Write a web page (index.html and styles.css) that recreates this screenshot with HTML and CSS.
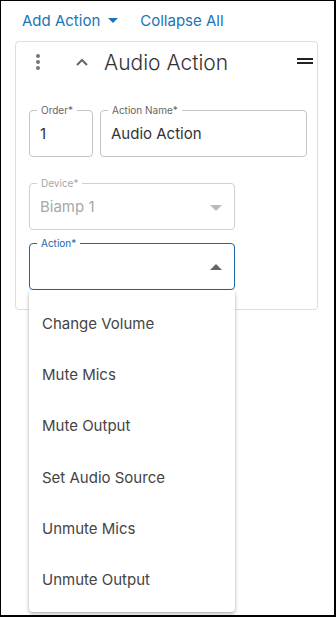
FILE: index.html
```html
<!DOCTYPE html>
<html lang="en">
<head>
    <meta charset="UTF-8">
    <title>Audio Action</title>
    <link rel="stylesheet" href="styles.css">
</head>
<body>
    <div class="frame">
        <div class="toolbar">
            <a class="link" href="#">Add Action <span class="caret-down"></span></a>
            <a class="link" href="#">Collapse All</a>
        </div>

        <div class="card">
            <div class="card-header">
                <span class="kebab"><i></i><i></i><i></i></span>
                <svg class="chevron" width="14" height="10" viewBox="0 0 14 10">
                    <path d="M2 8 L7 3 L12 8" fill="none" stroke="#666" stroke-width="2"/>
                </svg>
                <h2 class="card-title">Audio Action</h2>
                <span class="drag"><i></i><i></i></span>
            </div>

            <div class="card-body">
                <div class="row">
                    <div class="field field-order">
                        <label>Order*</label>
                        <div class="value">1</div>
                    </div>
                    <div class="field field-name">
                        <label>Action Name*</label>
                        <div class="value">Audio Action</div>
                    </div>
                </div>

                <div class="field field-select disabled">
                    <label>Device*</label>
                    <div class="value">Biamp 1</div>
                    <span class="arrow arrow-down"></span>
                </div>

                <div class="field field-select focused">
                    <label>Action*</label>
                    <div class="value"></div>
                    <span class="arrow arrow-up"></span>

                    <ul class="menu">
                        <li>Change Volume</li>
                        <li>Mute Mics</li>
                        <li>Mute Output</li>
                        <li>Set Audio Source</li>
                        <li>Unmute Mics</li>
                        <li>Unmute Output</li>
                    </ul>
                </div>
            </div>
        </div>
    </div>
</body>
</html>
```

FILE: styles.css
```css
body {
    margin: 0;
    font-family: 'Inter', 'Open Sans', sans-serif;
    color: #333;
    background: #fff;
}

.frame {
    width: 336px;
    height: 617px;
    box-sizing: border-box;
    border-style: solid;
    border-color: #000;
    border-width: 1px 2px 2px 1px;
    padding: 8px 0 0 14px;
}

/* --- top links --- */
.toolbar {
    display: flex;
    align-items: center;
    gap: 22px;
    padding-left: 7px;
    height: 22px;
}

.link {
    color: #1a74b6;
    text-decoration: none;
    font-size: 15px;
    display: flex;
    align-items: center;
}

.caret-down {
    display: inline-block;
    width: 0;
    height: 0;
    margin-left: 8px;
    border-left: 5px solid transparent;
    border-right: 5px solid transparent;
    border-top: 5px solid #1a74b6;
}

/* --- card --- */
.card {
    margin-top: 10px;
    width: 303px;
    height: 269px;
    box-sizing: border-box;
    border: 1px solid #ddd;
    border-radius: 4px;
}

.card-header {
    display: flex;
    align-items: center;
    height: 40px;
    padding: 0 4px 0 20px;
}

.kebab {
    display: flex;
    flex-direction: column;
    gap: 2px;
    width: 4px;
}
.kebab i {
    width: 4px;
    height: 4px;
    border-radius: 50%;
    background: #777;
}

.chevron {
    margin-left: 35px;
}

.card-title {
    margin: 0 0 0 15px;
    font-size: 21px;
    font-weight: 300;
    color: #333;
    flex: 1;
}

.drag {
    display: flex;
    flex-direction: column;
    gap: 2px;
    align-self: flex-start;
    margin-top: 16px;
}
.drag i {
    width: 16px;
    height: 2px;
    background: #222;
}

.card-body {
    padding: 28px 0 0 13px;
}

.row {
    display: flex;
    gap: 7px;
    margin-bottom: 26px;
}

/* --- outlined fields --- */
.field {
    position: relative;
    height: 47px;
    box-sizing: border-box;
    border: 1px solid #c4c4c4;
    border-radius: 4px;
    display: flex;
    align-items: center;
    padding: 0 10px;
}

.field label {
    position: absolute;
    top: -7px;
    left: 7px;
    padding: 0 4px;
    background: #fff;
    font-size: 10px;
    color: #666;
    line-height: 12px;
}

.field .value {
    font-size: 15px;
    color: #333;
}

.field-order {
    width: 64px;
}

.field-name {
    width: 207px;
}

.field-select {
    width: 206px;
}

.disabled {
    border-color: #d0d0d0;
    margin-bottom: 13px;
}
.disabled label,
.disabled .value {
    color: #a8a8a8;
}

.focused {
    border-color: #1a66ad;
}
.focused label {
    color: #1a66ad;
}

.arrow {
    position: absolute;
    right: 12px;
    top: 21px;
    width: 0;
    height: 0;
    border-left: 6px solid transparent;
    border-right: 6px solid transparent;
}
.arrow-down {
    border-top: 6px solid #bbb;
}
.arrow-up {
    top: 20px;
    border-bottom: 6px solid #666;
}

/* --- dropdown menu --- */
.menu {
    position: absolute;
    top: 46px;
    left: -1px;
    width: 206px;
    margin: 0;
    padding: 8px 0 7px;
    list-style: none;
    background: #fff;
    border-radius: 4px;
    box-shadow: 0 2px 4px rgba(0, 0, 0, 0.25), 0 1px 2px rgba(0, 0, 0, 0.1);
    z-index: 2;
}

.menu li {
    height: 51.2px;
    line-height: 51px;
    padding-left: 13px;
    font-size: 15px;
    color: #444;
}
```
